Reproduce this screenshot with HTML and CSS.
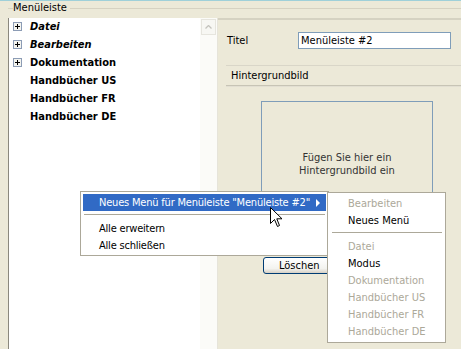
FILE: index.html
```html
<!DOCTYPE html>
<html lang="de">
  <head>
    <meta charset="UTF-8" />
    <title>Menüleiste</title>
    <link rel="stylesheet" href="styles.css">
  </head>
  <body>
    <div id="win">
      <div class="caption"><span>Menüleiste</span></div>
      <div class="main">
        <!-- Baum links -->
        <div class="tree">
          <div class="row"><span class="plus"></span><b class="it">Datei</b></div>
          <div class="row"><span class="plus"></span><b class="it">Bearbeiten</b></div>
          <div class="row"><span class="plus"></span><b>Dokumentation</b></div>
          <div class="row"><span class="noplus"></span><b>Handbücher US</b></div>
          <div class="row"><span class="noplus"></span><b>Handbücher FR</b></div>
          <div class="row"><span class="noplus"></span><b>Handbücher DE</b></div>
        </div>
        <div class="scroll">
          <div class="sbtn">
            <svg width="7" height="4" viewBox="0 0 7 4"><path d="M0.5 3.5 L3.5 0.5 L6.5 3.5" fill="none" stroke="#c4c3bd" stroke-width="1.3"/></svg>
          </div>
        </div>
        <!-- Eigenschaften rechts -->
        <div class="props">
          <div class="prow">
            <span class="plabel">Titel</span>
            <input class="ptext" type="text" value="Menüleiste #2" />
          </div>
          <div class="sep1"></div>
          <div class="sect">Hintergrundbild</div>
          <div class="sep2"></div>
          <div class="imgbox">Fügen Sie hier ein<br />Hintergrundbild ein</div>
          <div class="btnrow"><button class="xpbtn">Löschen</button></div>
        </div>
      </div>

      <!-- Kontextmenü -->
      <div class="menu m1">
        <div class="item hot">Neues Menü für Menüleiste "Menüleiste #2"<span class="arrow"></span></div>
        <div class="msep"></div>
        <div class="item">Alle erweitern</div>
        <div class="item">Alle schließen</div>
      </div>
      <div class="menu m2">
        <div class="item off">Bearbeiten</div>
        <div class="item">Neues Menü</div>
        <div class="msep"></div>
        <div class="item off">Datei</div>
        <div class="item">Modus</div>
        <div class="item off">Dokumentation</div>
        <div class="item off">Handbücher US</div>
        <div class="item off">Handbücher FR</div>
        <div class="item off">Handbücher DE</div>
      </div>

      <svg class="cursor" width="13" height="21" viewBox="0 0 13 21">
        <path d="M0.5 0.5 L0.5 16.5 L4.5 12.5 L7.5 19.5 L9.5 18.5 L6.8 11.8 L12 11.8 Z" fill="#fff" stroke="#000" stroke-width="1"/>
      </svg>
    </div>
  </body>
</html>
```

FILE: styles.css
```css
body {
  margin: 0;
  background: #ece9d8;
  font-family: "DejaVu Sans Condensed", "DejaVu Sans", sans-serif;
  font-size: 11px;
  color: #000;
}
#win {
  position: relative;
  width: 461px;
  height: 349px;
  overflow: hidden;
  border-top: solid 1px #9fd0d9;
  box-sizing: border-box;
}
.caption {
  height: 17px;
  position: relative;
  padding-left: 13px;
  line-height: 14px;
}
.caption span {
  background: #ece9d8;
  position: relative;
  padding-right: 3px;
}
.caption::before {
  content: "";
  position: absolute;
  left: 8px;
  right: 0;
  top: 7px;
  border-top: solid 1px #d6d2c2;
}
.main {
  display: flex;
  height: 331px;
  margin-left: 8px;
}
.tree {
  width: 191px;
  background: #fff;
  border-left: solid 1px #8a887e;
  padding-top: 0;
}
.row {
  height: 18px;
  display: flex;
  align-items: center;
  font-size: 11px;
}
.row:first-child {
  margin-top: -1px;
}
.row b {
  font-weight: bold;
}
.it {
  font-style: italic;
}
.plus,
.noplus {
  width: 9px;
  height: 9px;
  margin: 0 8px 0 4px;
  box-sizing: border-box;
}
.plus {
  border: solid 1px #8c9cb5;
  background: linear-gradient(#000, #000) center / 5px 1px no-repeat,
    linear-gradient(#000, #000) center / 1px 5px no-repeat, #f4f4ef;
}
.scroll {
  width: 17px;
  background: #fbfbf8;
  border-right: solid 1px #e6e4da;
}
.sbtn {
  height: 16px;
  margin: 1px 0 0 1px;
  width: 15px;
  border: solid 1px #e6e5de;
  box-sizing: border-box;
  background: #f7f7f3;
  display: flex;
  align-items: center;
  justify-content: center;
}
.props {
  flex: 1;
  border-top: solid 2px #d5d2c2;
  padding-left: 8px;
}
.prow {
  display: flex;
  align-items: center;
  margin-top: 12px;
  height: 17px;
}
.plabel {
  width: 71px;
  padding-left: 1px;
}
.ptext {
  width: 153px;
  height: 17px;
  box-sizing: border-box;
  border: solid 1px #7f9db9;
  font-family: inherit;
  font-size: 11px;
  padding: 0 2px;
  margin: 0;
}
.sep1 {
  margin-top: 16px;
  border-top: solid 1px #d9d6c8;
}
.sect {
  height: 19px;
  line-height: 19px;
  padding-left: 5px;
}
.sep2 {
  border-top: solid 1px #c7c4b5;
  border-bottom: solid 1px #e2dfd2;
}
.imgbox {
  margin: 14px 0 0 35px;
  width: 172px;
  height: 152px;
  box-sizing: border-box;
  border: solid 1px #7f9db9;
  color: #333;
  text-align: center;
  padding-top: 49px;
  line-height: 13px;
}
.btnrow {
  margin: 4px 0 0 37px;
}
.xpbtn {
  width: 75px;
  height: 17px;
  font-family: inherit;
  font-size: 11px;
  border: solid 1px #003c74;
  border-radius: 3px;
  background: linear-gradient(#fff, #f3f3ef 70%, #d6d0c5);
  text-align: left;
  padding: 0 0 0 15px;
}
.menu {
  position: absolute;
  background: #fff;
  border: solid 1px #aca899;
  padding: 2px 2px 1px 2px;
}
.m1 {
  left: 80px;
  top: 190px;
  width: 243px;
}
.m1 .item {
  letter-spacing: -0.2px;
  padding-left: 16px;
}
.m2 {
  left: 327px;
  top: 191px;
  width: 113px;
  padding-bottom: 2px;
}
.item {
  height: 17px;
  line-height: 17px;
  padding-left: 17px;
  position: relative;
  white-space: nowrap;
}
.m2 .item {
  padding-left: 18px;
}
.hot {
  background: #316ac5;
  color: #fff;
}
.off {
  color: #aca899;
}
.arrow {
  position: absolute;
  right: 6px;
  top: 5px;
  border-left: solid 4px #fff;
  border-top: solid 4px transparent;
  border-bottom: solid 4px transparent;
}
.msep {
  height: 9px;
  position: relative;
}
.msep::after {
  content: "";
  position: absolute;
  left: 1px;
  right: 1px;
  top: 3px;
  border-top: solid 1px #aca899;
}
.m2 .msep::after {
  left: 2px;
  right: 1px;
}
.cursor {
  position: absolute;
  left: 270px;
  top: 206px;
}
```
